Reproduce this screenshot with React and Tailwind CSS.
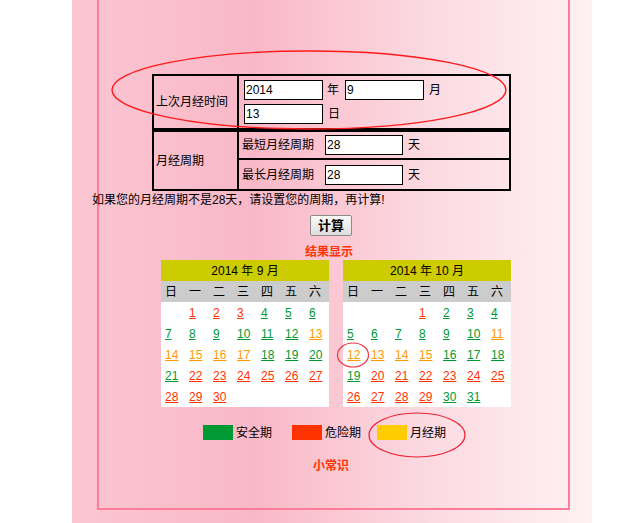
import React from "react";

const FONT = { fontFamily: '"Liberation Sans", "Noto Sans CJK SC", sans-serif' };

const C = { r: "text-[#ff3300]", g: "text-[#009933]", o: "text-[#ff9900]" };

// [day, color] ; null = empty cell
const sep = [
  [null, [1, "r"], [2, "r"], [3, "r"], [4, "g"], [5, "g"], [6, "g"]],
  [[7, "g"], [8, "g"], [9, "g"], [10, "g"], [11, "g"], [12, "g"], [13, "o"]],
  [[14, "o"], [15, "o"], [16, "o"], [17, "o"], [18, "g"], [19, "g"], [20, "g"]],
  [[21, "g"], [22, "r"], [23, "r"], [24, "r"], [25, "r"], [26, "r"], [27, "r"]],
  [[28, "r"], [29, "r"], [30, "r"], null, null, null, null],
];

const oct = [
  [null, null, null, [1, "r"], [2, "g"], [3, "g"], [4, "g"]],
  [[5, "g"], [6, "g"], [7, "g"], [8, "g"], [9, "g"], [10, "g"], [11, "o"]],
  [[12, "o"], [13, "o"], [14, "o"], [15, "o"], [16, "g"], [17, "g"], [18, "g"]],
  [[19, "g"], [20, "r"], [21, "r"], [22, "r"], [23, "r"], [24, "r"], [25, "r"]],
  [[26, "r"], [27, "r"], [28, "r"], [29, "r"], [30, "g"], [31, "g"], null],
];

const week = ["日", "一", "二", "三", "四", "五", "六"];

function Calendar({ title, rows }) {
  return (
    <div className="w-[168px] bg-white">
      <div className="h-[21px] bg-[#cccc00] flex items-center justify-center text-[12px] text-black">
        {title}
      </div>
      <div className="h-[21px] bg-[#cccccc] grid grid-cols-7 items-center text-[12px] text-black">
        {week.map((w) => (
          <span key={w} className="pl-[4px]">
            {w}
          </span>
        ))}
      </div>
      {rows.map((row, i) => (
        <div key={i} className="h-[21px] grid grid-cols-7 items-center text-[12px]">
          {row.map((d, j) => (
            <span key={j} className="pl-[4px]">
              {d && <a className={"underline " + C[d[1]]}>{d[0]}</a>}
            </span>
          ))}
        </div>
      ))}
    </div>
  );
}

function Box({ value, w = "w-[79px]" }) {
  return (
    <input
      readOnly
      value={value}
      className={w + " h-[20px] bg-white border border-black px-[1px] text-[12px] text-black outline-none"}
      style={FONT}
    />
  );
}

export default function App() {
  return (
    <div className="relative w-[621px] h-[523px] overflow-hidden bg-white text-[12px] text-black" style={FONT}>
      <div className="ml-[72px] w-[520px] h-[523px] bg-[linear-gradient(90deg,#fbc6d2_0%,#f9b8c7_35%,#fcdbe2_70%,#fff1f4_100%)]">
        <div className="ml-[25px] w-[473px] h-[510px] border-l-2 border-r-2 border-b-2 border-[#ff7d98] pt-[74px]">
          {/* start form */}
          <div className="ml-[53px] w-[359px]">
            <div className="flex h-[56px] border-2 border-black">
              <div className="w-[85px] border-r-2 border-black flex items-center pl-[2px]">上次月经时间</div>
              <div className="flex-1 flex flex-col gap-[4px] pl-[5px] pt-[4px]">
                <div className="flex items-center">
                  <Box value="2014" />
                  <span className="ml-[4px]">年</span>
                  <span className="ml-[6px]">
                    <Box value="9" />
                  </span>
                  <span className="ml-[5px]">月</span>
                </div>
                <div className="flex items-center">
                  <Box value="13" />
                  <span className="ml-[5px]">日</span>
                </div>
              </div>
            </div>
            <div className="flex h-[61px] border-2 border-black">
              <div className="w-[85px] border-r-2 border-black flex items-center pl-[2px]">月经周期</div>
              <div className="flex-1 flex flex-col">
                <div className="h-[28px] flex items-center pl-[3px] border-b-2 border-black">
                  <span>最短月经周期</span>
                  <span className="ml-[11px]">
                    <Box value="28" w="w-[78px]" />
                  </span>
                  <span className="ml-[5px]">天</span>
                </div>
                <div className="flex-1 flex items-center pl-[3px]">
                  <span>最长月经周期</span>
                  <span className="ml-[11px]">
                    <Box value="28" w="w-[78px]" />
                  </span>
                  <span className="ml-[5px]">天</span>
                </div>
              </div>
            </div>
          </div>
          {/* end form */}

          <p className="ml-[-7px] mt-[2px] leading-[15px] whitespace-nowrap">
            如果您的月经周期不是28天，请设置您的周期，再计算!
          </p>

          <button className="ml-[211px] mt-[7px] w-[42px] h-[21px] border border-[#8a8a8a] rounded-[2px] bg-[linear-gradient(180deg,#fafafa,#dedede)] font-bold text-[13px] leading-none text-black">
            计算
          </button>

          <p className="ml-[206px] mt-[9px] leading-[15px] font-bold text-[#ff3300]">结果显示</p>

          <div className="ml-[62px] flex gap-[14px]">
            <Calendar title="2014 年 9 月" rows={sep} />
            <Calendar title="2014 年 10 月" rows={oct} />
          </div>

          {/* legend */}
          <div className="ml-[104px] mt-[18px] flex items-center h-[15px]">
            <span className="w-[30px] h-[15px] bg-[#009933]" />
            <span className="ml-[3px]">安全期</span>
            <span className="ml-[20px] w-[30px] h-[15px] bg-[#ff3300]" />
            <span className="ml-[3px]">危险期</span>
            <span className="ml-[16px] w-[30px] h-[15px] bg-[#ffcc00]" />
            <span className="ml-[3px]">月经期</span>
          </div>

          <p className="ml-[214px] mt-[19px] leading-[15px] font-bold text-[#ff3300]">小常识</p>
        </div>
      </div>

      {/* hand-drawn red marks over the page */}
      <svg className="absolute left-0 top-0 pointer-events-none" width="621" height="523">
        <ellipse cx="309" cy="90" rx="197" ry="39" fill="none" stroke="#ff1a1a" strokeWidth="1.4" />
        <ellipse cx="353" cy="355" rx="15.5" ry="12" fill="none" stroke="#ee3344" strokeWidth="1.2" />
        <ellipse cx="417" cy="435" rx="48" ry="22" fill="none" stroke="#ee2233" strokeWidth="1.2" />
      </svg>
    </div>
  );
}
